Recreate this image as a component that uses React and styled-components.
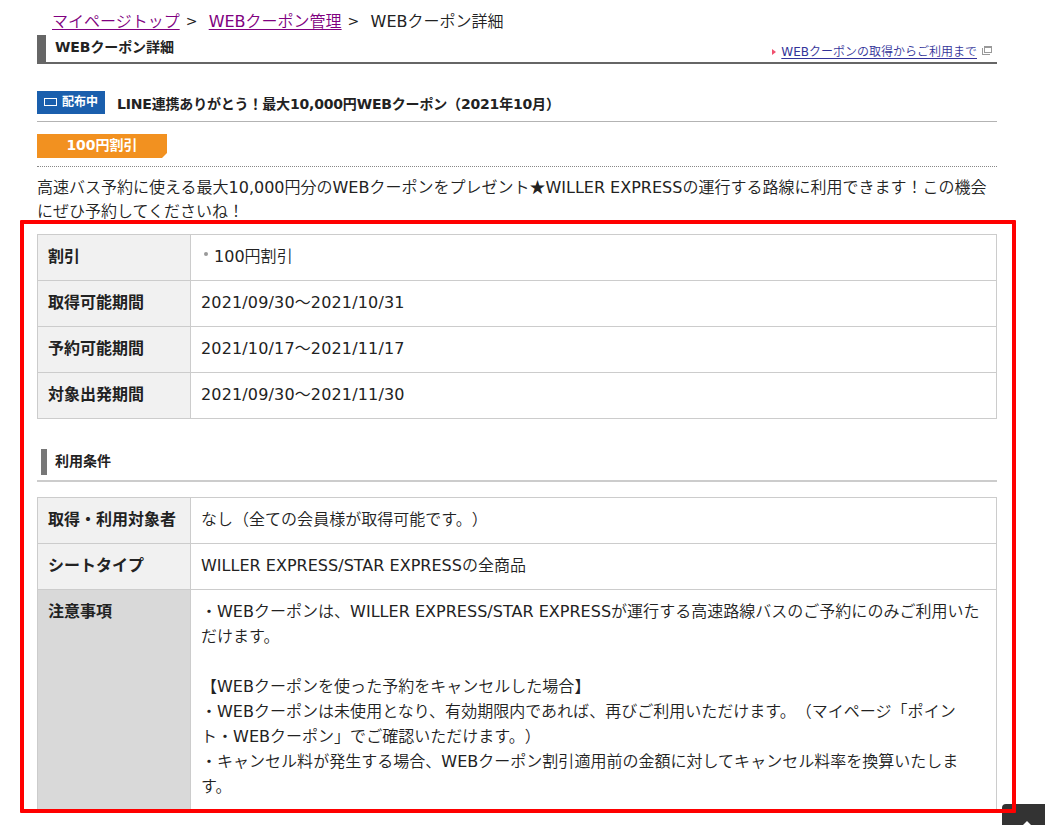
import React from "react";
import styled, { createGlobalStyle } from "styled-components";

const periodRows = [
  { title: "割引", body: "100円割引", dot: true },
  { title: "取得可能期間", body: "2021/09/30～2021/10/31", date: true },
  { title: "予約可能期間", body: "2021/10/17～2021/11/17", date: true },
  { title: "対象出発期間", body: "2021/09/30～2021/11/30", date: true },
];

const notes = [
  "・WEBクーポンは、WILLER EXPRESS/STAR EXPRESSが運行する高速路線バスのご予約にのみご利用いた",
  "だけます。",
  "",
  "【WEBクーポンを使った予約をキャンセルした場合】",
  "・WEBクーポンは未使用となり、有効期限内であれば、再びご利用いただけます。（マイページ「ポイン",
  "ト・WEBクーポン」でご確認いただけます。）",
  "・キャンセル料が発生する場合、WEBクーポン割引適用前の金額に対してキャンセル料率を換算いたしま",
  "す。",
];

const conditionRows = [
  { title: "取得・利用対象者", body: "なし（全ての会員様が取得可能です。）" },
  { title: "シートタイプ", body: "WILLER EXPRESS/STAR EXPRESSの全商品" },
  { title: "注意事項", body: notes.join("\n"), dark: true },
];

const boldFont = '"DejaVu Sans", "Noto Sans CJK JP", sans-serif';

const InfoTable = ({ rows }) => (
  <Table>
    {rows.map((row) => (
      <Row key={row.title}>
        <Th $dark={row.dark}>{row.title}</Th>
        <Td $date={row.date}>
          {row.dot && <Dot />}
          {row.body}
        </Td>
      </Row>
    ))}
  </Table>
);

const App = () => {
  return (
    <Page>
      <GlobalStyle />
      <Breadcrumb>
        <CrumbLink href="#">マイページトップ</CrumbLink>
        <Arrow>&gt;</Arrow>
        <CrumbLink href="#">WEBクーポン管理</CrumbLink>
        <Arrow>&gt;</Arrow>
        <span>WEBクーポン詳細</span>
      </Breadcrumb>
      <Header>
        <HeaderTitle>WEBクーポン詳細</HeaderTitle>
        <Guide>
          <Triangle />
          <GuideLink href="#">WEBクーポンの取得からご利用まで</GuideLink>
          <WindowIcon width="10" height="9" viewBox="0 0 10 9">
            <path d="M2.5 0.5H9.5V6.5H2.5ZM2.5 1.5H9.5M0.5 2V8.5H8" />
          </WindowIcon>
        </Guide>
      </Header>
      <CouponHead>
        <Status>
          <TicketMark />
          配布中
        </Status>
        <CouponTitle>
          LINE連携ありがとう！最大10,000円WEBクーポン（2021年10月）
        </CouponTitle>
      </CouponHead>
      <DiscountBox>
        <Discount>100円割引</Discount>
      </DiscountBox>
      <Lead>
        高速バス予約に使える最大10,000円分のWEBクーポンをプレゼント<Star>★</Star>
        WILLER EXPRESSの運行する路線に利用できます！この機会
        <br />
        にぜひ予約してくださいね！
      </Lead>
      <InfoTable rows={periodRows} />
      <SectionHead>
        <SectionTitle>利用条件</SectionTitle>
      </SectionHead>
      <InfoTable rows={conditionRows} />
      <PageTop>
        <svg width="16" height="10" viewBox="0 0 16 10">
          <path d="M8 0L16 8L13.5 10.5L8 5L2.5 10.5L0 8Z" fill="#fff" />
        </svg>
      </PageTop>
      <RedFrame />
    </Page>
  );
};

const GlobalStyle = createGlobalStyle`
  * {
    box-sizing: border-box;
  }
  body {
    margin: 0;
    background-color: #fff;
    color: #222;
    font-family: "DejaVu Sans", "Noto Sans CJK JP DemiLight", "Noto Sans CJK JP", sans-serif;
    font-size: 16px;
    line-height: 25px;
    text-spacing-trim: space-all;
  }
`;

const Page = styled.div`
  position: relative;
  width: 1045px;
  height: 825px;
  padding: 9px 48px 0 37px;
  overflow: hidden;
  white-space: nowrap;
`;
const Breadcrumb = styled.div`
  display: flex;
  height: 26px;
  padding-left: 15px;
`;
const CrumbLink = styled.a`
  color: #800080;
  text-underline-offset: 2px;
`;
const Arrow = styled.span`
  width: 29px;
  padding-left: 6px;
  font-size: 14px;
`;
const Header = styled.div`
  display: flex;
  justify-content: space-between;
  height: 29px;
  padding-left: 9px;
  border-left: 9px solid #666;
  border-bottom: 2px solid #666;
`;
const HeaderTitle = styled.h1`
  margin: 0;
  font-family: ${boldFont};
  font-size: 14px;
  font-weight: bold;
  letter-spacing: -0.1px;
  line-height: 24px;
`;
const Guide = styled.div`
  display: flex;
  align-items: center;
  padding: 6px 5px 0 0;
  font-size: 12px;
  line-height: 20px;
`;
const Triangle = styled.i`
  margin-right: 5px;
  border-left: 4px solid #f0506e;
  border-top: 3px solid transparent;
  border-bottom: 3px solid transparent;
`;
const GuideLink = styled.a`
  color: #339;
  text-underline-offset: 2px;
`;
const WindowIcon = styled.svg`
  margin: 0 0 2px 5px;
  fill: none;
  stroke: #999;
  shape-rendering: crispEdges;
`;
const CouponHead = styled.div`
  display: flex;
  height: 31px;
  margin-top: 27px;
  border-bottom: 1px solid #b3b3b3;
`;
const Status = styled.div`
  display: flex;
  align-items: center;
  width: 68px;
  height: 23px;
  padding: 0 0 1px 7px;
  background-color: #1a5fad;
  color: #fff;
  font-family: ${boldFont};
  font-size: 12px;
  font-weight: bold;
`;
const TicketMark = styled.i`
  width: 13px;
  height: 8px;
  margin-right: 5px;
  border: 1px solid #fff;
`;
const CouponTitle = styled.h2`
  margin: 0 0 0 12px;
  font-family: ${boldFont};
  font-size: 14px;
  font-weight: bold;
  letter-spacing: -0.18px;
  line-height: 26px;
`;
const DiscountBox = styled.div`
  height: 45px;
  padding-top: 12px;
  border-bottom: 1px dotted #888;
`;
const Discount = styled.div`
  width: 130px;
  height: 24px;
  background-color: #f29120;
  clip-path: polygon(0 0, 100% 0, 100% 19px, 125px 100%, 0 100%);
  color: #fff;
  font-family: ${boldFont};
  font-size: 14px;
  font-weight: bold;
  line-height: 22px;
  text-align: center;
`;
const Lead = styled.p`
  height: 67px;
  margin: 0;
  padding-top: 7px;
  line-height: 24px;
`;
const Star = styled.span`
  font-family: "Noto Sans CJK JP", sans-serif;
`;
const Table = styled.div`
  border: 1px solid #ccc;
`;
const Row = styled.div`
  display: flex;
  & + & {
    border-top: 1px solid #ccc;
  }
`;
const Th = styled.div`
  width: 153px;
  padding: 9px 10px 11px;
  border-right: 1px solid #ccc;
  background-color: ${(props) => (props.$dark ? "#d9d9d9" : "#f1f1f1")};
  font-family: ${boldFont};
  font-weight: bold;
`;
const Td = styled.div`
  flex: 1;
  padding: 9px 10px 11px;
  letter-spacing: ${(props) => (props.$date ? "0.15px" : "0.02px")};
  white-space: pre;
`;
const Dot = styled.i`
  display: inline-block;
  width: 4px;
  height: 4px;
  margin: 0 6px 0 3px;
  border-radius: 50%;
  background-color: #999;
  vertical-align: 6px;
`;
const SectionHead = styled.div`
  height: 63px;
  margin-bottom: 15px;
  padding: 30px 0 0 4px;
  border-bottom: 2px solid #ccc;
`;
const SectionTitle = styled.h3`
  height: 26px;
  margin: 0;
  padding-left: 8px;
  border-left: 6px solid #777;
  font-family: ${boldFont};
  font-size: 14px;
  line-height: 24px;
`;
const PageTop = styled.div`
  position: absolute;
  left: 1002px;
  top: 804px;
  width: 50px;
  height: 50px;
  padding: 17px 0 0 17px;
  border-radius: 4px;
  background-color: #333;
  line-height: 0;
`;
const RedFrame = styled.div`
  position: absolute;
  left: 20px;
  top: 220px;
  width: 996px;
  height: 593px;
  border: 4px solid #f00;
  border-radius: 1px;
`;

export default App;
